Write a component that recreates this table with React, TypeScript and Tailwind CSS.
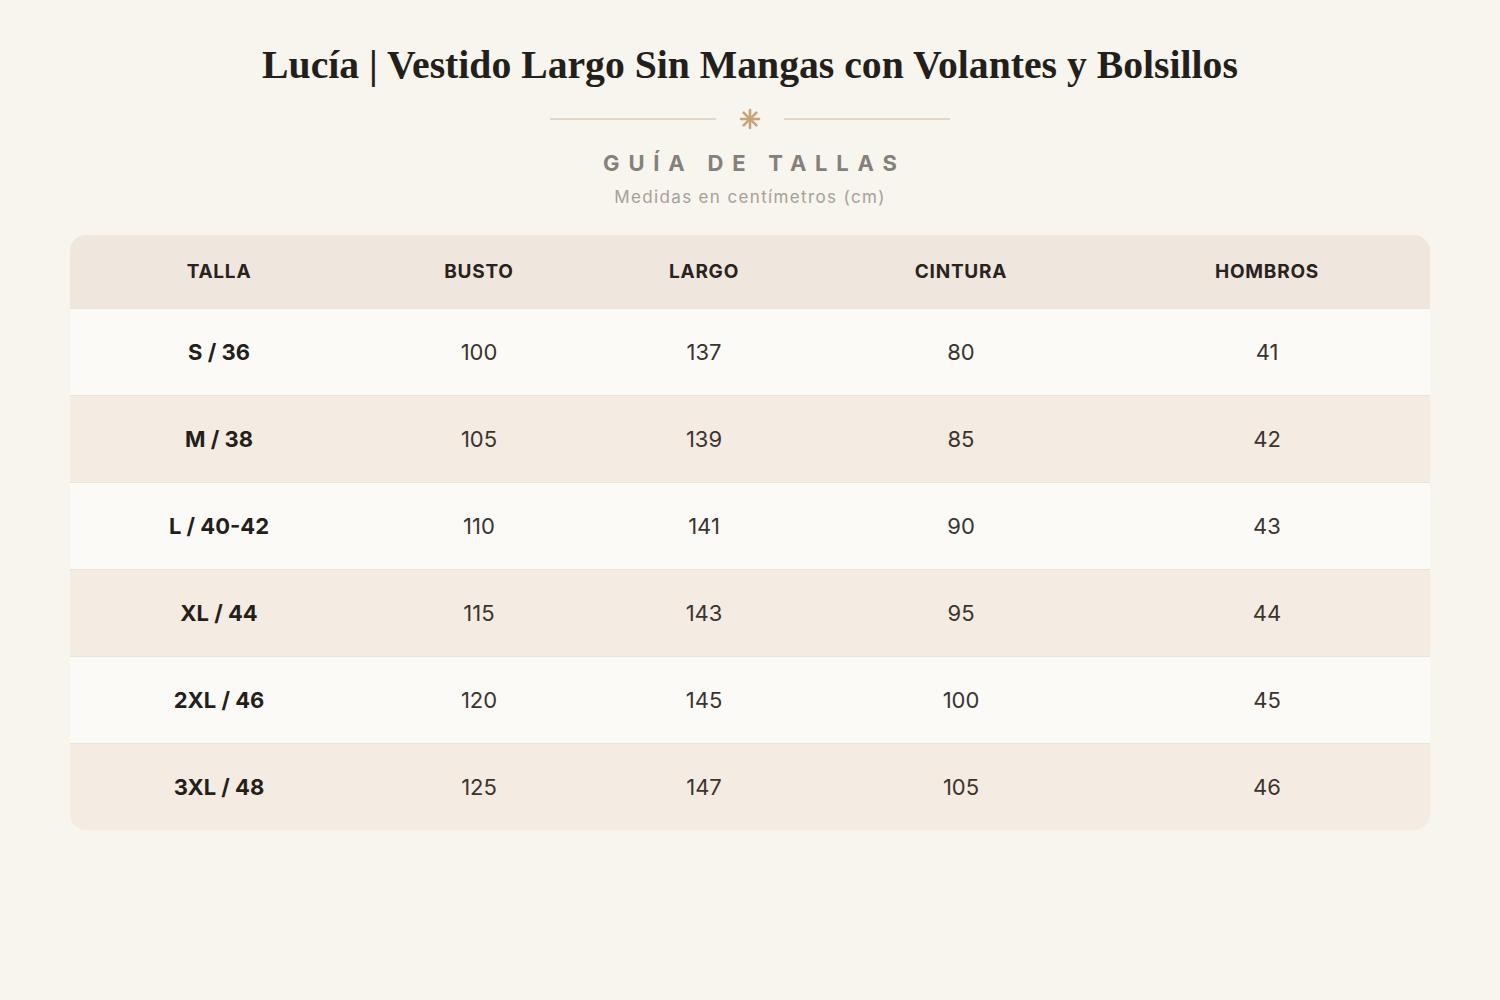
const columns = ["TALLA", "BUSTO", "LARGO", "CINTURA", "HOMBROS"];

const rows = [
  ["S / 36", "100", "137", "80", "41"],
  ["M / 38", "105", "139", "85", "42"],
  ["L / 40-42", "110", "141", "90", "43"],
  ["XL / 44", "115", "143", "95", "44"],
  ["2XL / 46", "120", "145", "100", "45"],
  ["3XL / 48", "125", "147", "105", "46"],
];

function Asterisk() {
  return (
    <svg width="22" height="22" viewBox="0 0 22 22" className="mx-[23px]">
      <g stroke="#c9a47c" strokeWidth="2.6" strokeLinecap="round">
        <line x1="11" y1="2" x2="11" y2="20" />
        <line x1="2" y1="11" x2="20" y2="11" />
        <line x1="4.6" y1="4.6" x2="17.4" y2="17.4" />
        <line x1="17.4" y1="4.6" x2="4.6" y2="17.4" />
      </g>
    </svg>
  );
}

export default function App() {
  return (
    <div className="min-h-[1000px] w-full bg-[#f8f4ee] font-['Inter',sans-serif]">
      <div className="flex flex-col items-center pt-[40px]">
        {/* Title */}
        <h1 className="font-['Liberation_Serif',serif] text-[39.7px] font-bold leading-[50px] text-[#231f1b]">
          Lucía | Vestido Largo Sin Mangas con Volantes y Bolsillos
        </h1>

        {/* Divider */}
        <div className="mt-[18px] flex items-center">
          <div className="h-[2px] w-[166px] bg-[#e2d6c8]" />
          <Asterisk />
          <div className="h-[2px] w-[166px] bg-[#e2d6c8]" />
        </div>

        <h2 className="mt-[19px] pl-[0.4em] text-[22px] font-bold leading-[28px] tracking-[0.4em] text-[#85807a]">
          GUÍA DE TALLAS
        </h2>
        <p className="mt-[9px] text-[17px] leading-[22px] tracking-[0.08em] text-[#a7a097]">
          Medidas en centímetros (cm)
        </p>
      </div>

      {/* Table */}
      <div className="mx-[70px] mt-[27px] overflow-hidden rounded-[16px]">
        <div className="grid h-[73px] grid-cols-[298px_222px_228px_286px_326px] items-center bg-[#efe6dd]">
          {columns.map((c) => (
            <div
              key={c}
              className="pt-[2px] text-center text-[19px] font-bold tracking-[0.04em] text-[#29231e]"
            >
              {c}
            </div>
          ))}
        </div>
        {rows.map((r, i) => (
          <div
            key={r[0]}
            className={
              "grid h-[87px] grid-cols-[298px_222px_228px_286px_326px] items-center border-t border-[#ede3d8] " +
              (i % 2 === 0 ? "bg-[#fcfaf7]" : "bg-[#f4ebe2]")
            }
          >
            {r.map((cell, j) => (
              <div
                key={j}
                className={
                  j === 0
                    ? "text-center text-[22px] font-bold text-[#241f1b]"
                    : "text-center text-[22px] font-normal text-[#3a342f]"
                }
              >
                {cell}
              </div>
            ))}
          </div>
        ))}
      </div>
    </div>
  );
}
